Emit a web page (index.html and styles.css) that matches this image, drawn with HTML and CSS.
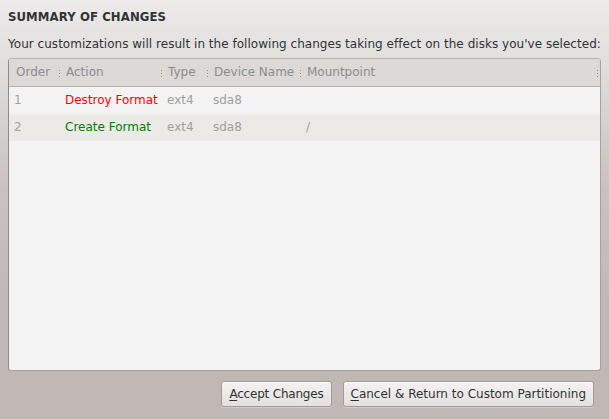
FILE: index.html
```html
<!DOCTYPE html>
<html>
<head>
<meta charset="utf-8">
<link rel="stylesheet" href="styles.css">
</head>
<body>
<div class="dialog">
  <h1 class="title">SUMMARY OF CHANGES</h1>
  <p class="intro">Your customizations will result in the following changes taking effect on the disks you've selected:</p>
  <div class="table">
    <div class="row head">
      <div class="cell c-order">Order</div>
      <div class="cell c-action"><span class="grip"></span>Action</div>
      <div class="cell c-type"><span class="grip"></span>Type</div>
      <div class="cell c-dev"><span class="grip"></span>Device Name</div>
      <div class="cell c-mount"><span class="grip"></span>Mountpoint</div>
      <div class="cell c-end"><span class="grip"></span></div>
    </div>
    <div class="row odd">
      <div class="cell c-order">1</div>
      <div class="cell c-action destroy">Destroy Format</div>
      <div class="cell c-type">ext4</div>
      <div class="cell c-dev">sda8</div>
      <div class="cell c-mount"></div>
    </div>
    <div class="row even">
      <div class="cell c-order">2</div>
      <div class="cell c-action create">Create Format</div>
      <div class="cell c-type">ext4</div>
      <div class="cell c-dev">sda8</div>
      <div class="cell c-mount">/</div>
    </div>
  </div>
  <div class="buttons">
    <button class="btn btn-accept"><u>A</u>ccept Changes</button>
    <button class="btn"><u>C</u>ancel &amp; Return to Custom Partitioning</button>
  </div>
</div>
</body>
</html>
```

FILE: styles.css
```css
html, body {
  margin: 0;
  padding: 0;
  height: 100%;
}
body {
  width: 609px;
  height: 419px;
  overflow: hidden;
  font-family: "DejaVu Sans", sans-serif;
  background: linear-gradient(to bottom, #ecebea 0px, #e2dfdd 60px, #c9c2be 190px, #c0b8b4 300px, #c0b8b4 419px);
}
.dialog {
  display: flex;
  flex-direction: column;
  height: 100%;
  padding: 0 8px;
  box-sizing: border-box;
}
.title {
  margin: 10px 0 0 0;
  font-size: 11.7px;
  font-weight: bold;
  color: #2e3436;
  line-height: 15px;
  letter-spacing: 0.1px;
}
.intro {
  margin: 11px 0 0 0;
  font-size: 12px;
  line-height: 16px;
  color: #2e3436;
  white-space: nowrap;
  letter-spacing: 0.03px;
}
.table {
  margin-top: 6px;
  height: 313px;
  box-sizing: border-box;
  background: #f3f3f3;
  border: 1px solid #a8a29f;
  border-top-color: #b8b3b0;
  border-radius: 4px 4px 3px 3px;
  border-left: 1px solid #8f8a87;
  overflow: hidden;
  font-size: 12px;
}
.row {
  display: flex;
  height: 27px;
  align-items: stretch;
  line-height: 27px;
}
.row.head {
  height: 27px;
  background: #dcd9d7;
  border-bottom: 1px solid #b5b1ae;
  color: #8b8b8b;
}
.row.even {
  background: #ebeae6;
}
.cell {
  position: relative;
  box-sizing: border-box;
  white-space: nowrap;
  color: #a0a0a0;
}
.head .cell { color: #8d8d8d; }
.c-order { width: 50px; padding-left: 6px; }
.c-action { width: 102px; padding-left: 6px; }
.c-type { width: 46px; padding-left: 6px; }
.c-dev { width: 93px; padding-left: 6px; }
.c-mount { flex: 1; padding-left: 6px; }
.c-end { width: 3px; }
.row .c-order { padding-left: 5px; }
.head .c-order { padding-left: 7px; }
.head .c-action, .head .c-type, .head .c-dev, .head .c-mount { padding-left: 7px; }
.grip {
  position: absolute;
  left: 0;
  top: 11px;
  width: 1px;
  height: 7px;
  background: repeating-linear-gradient(to bottom, #8e8e8e 0 1.5px, transparent 1.5px 3px);
}
.destroy { color: #ff0000; }
.create { color: #008000; }
.buttons {
  display: flex;
  justify-content: flex-end;
  gap: 11px;
  margin-top: 10px;
  padding-right: 7px;
}
.btn {
  font-family: "DejaVu Sans", sans-serif;
  font-size: 12px;
  color: #2e3436;
  height: 26px;
  padding: 0 7px;
  border: 1px solid #a29c98;
  border-radius: 3px;
  background: linear-gradient(to bottom, #f4f3f2, #e3e0dd);
  box-shadow: inset 0 1px 0 #ffffff, 0 1px 0 rgba(255,255,255,0.3);
}
.btn-accept { letter-spacing: -0.2px; }
.btn u { text-decoration-thickness: 1px; text-underline-offset: 2px; }
```
